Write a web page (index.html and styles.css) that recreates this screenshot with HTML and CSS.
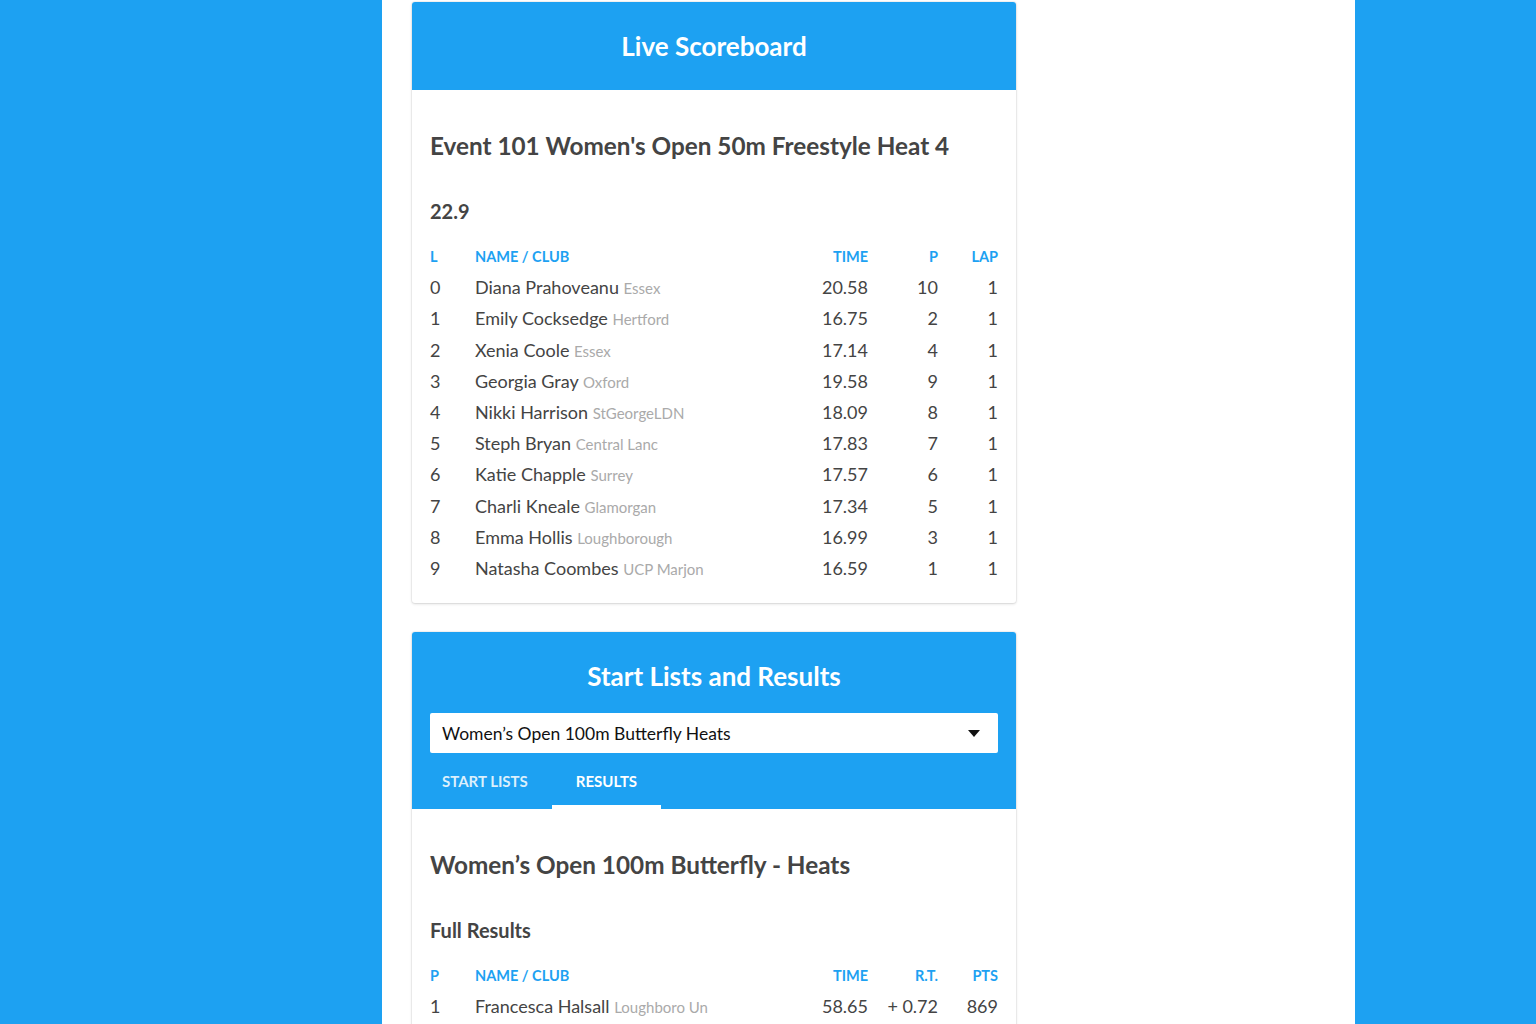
FILE: index.html
```html
<!DOCTYPE html>
<html lang="en">
<head>
<meta charset="utf-8">
<title>Live Scoreboard</title>
<link rel="stylesheet" href="styles.css">
</head>
<body>
<main class="page">
  <section class="card">
    <header class="card-head">
      <h1 class="card-title">Live Scoreboard</h1>
    </header>
    <div class="card-body">
      <h2 class="section-title">Event 101 Women's Open 50m Freestyle Heat 4</h2>
      <div class="sub-title">22.9</div>
      <div class="table">
        <div class="row head"><span>L</span><span>NAME / CLUB</span><span class="num">TIME</span><span class="num">P</span><span class="num">LAP</span></div>
        <div class="row"><span>0</span><span>Diana Prahoveanu <small>Essex</small></span><span class="num">20.58</span><span class="num">10</span><span class="num">1</span></div>
        <div class="row"><span>1</span><span>Emily Cocksedge <small>Hertford</small></span><span class="num">16.75</span><span class="num">2</span><span class="num">1</span></div>
        <div class="row"><span>2</span><span>Xenia Coole <small>Essex</small></span><span class="num">17.14</span><span class="num">4</span><span class="num">1</span></div>
        <div class="row"><span>3</span><span>Georgia Gray <small>Oxford</small></span><span class="num">19.58</span><span class="num">9</span><span class="num">1</span></div>
        <div class="row"><span>4</span><span>Nikki Harrison <small>StGeorgeLDN</small></span><span class="num">18.09</span><span class="num">8</span><span class="num">1</span></div>
        <div class="row"><span>5</span><span>Steph Bryan <small>Central Lanc</small></span><span class="num">17.83</span><span class="num">7</span><span class="num">1</span></div>
        <div class="row"><span>6</span><span>Katie Chapple <small>Surrey</small></span><span class="num">17.57</span><span class="num">6</span><span class="num">1</span></div>
        <div class="row"><span>7</span><span>Charli Kneale <small>Glamorgan</small></span><span class="num">17.34</span><span class="num">5</span><span class="num">1</span></div>
        <div class="row"><span>8</span><span>Emma Hollis <small>Loughborough</small></span><span class="num">16.99</span><span class="num">3</span><span class="num">1</span></div>
        <div class="row"><span>9</span><span>Natasha Coombes <small>UCP Marjon</small></span><span class="num">16.59</span><span class="num">1</span><span class="num">1</span></div>
      </div>
    </div>
  </section>

  <section class="card">
    <header class="card-head tall">
      <h1 class="card-title">Start Lists and Results</h1>
      <div class="select">
        <span>Women’s Open 100m Butterfly Heats</span>
        <svg class="caret" width="12" height="7" viewBox="0 0 12 7"><path d="M0 0h12L6 7z" fill="#111"/></svg>
      </div>
      <nav class="tabs">
        <span class="tab">START LISTS</span>
        <span class="tab active">RESULTS</span>
      </nav>
    </header>
    <div class="card-body">
      <h2 class="section-title">Women’s Open 100m Butterfly - Heats</h2>
      <div class="sub-title">Full Results</div>
      <div class="table">
        <div class="row head"><span>P</span><span>NAME / CLUB</span><span class="num">TIME</span><span class="num">R.T.</span><span class="num">PTS</span></div>
        <div class="row"><span>1</span><span>Francesca Halsall <small>Loughboro Un</small></span><span class="num">58.65</span><span class="num">+ 0.72</span><span class="num">869</span></div>
      </div>
    </div>
  </section>
</main>
</body>
</html>
```

FILE: styles.css
```css
* { box-sizing: border-box; }

html, body {
  margin: 0;
  padding: 0;
}

body {
  background: #1da1f2;
  font-family: Lato, "Noto Sans", sans-serif;
  color: #444;
  height: 1024px;
  overflow: hidden;
}

.page {
  width: 973px;
  margin-left: 382px;
  min-height: 1024px;
  background: #fff;
  padding: 2px 339px 0 30px;
  display: flex;
  flex-direction: column;
  gap: 29px;
}

.card {
  background: #fff;
  border-radius: 3px;
  box-shadow: 0 1px 3px rgba(0, 0, 0, 0.14), 0 0 0 1px rgba(0, 0, 0, 0.04);
  overflow: hidden;
}

.card-head {
  background: #1da1f2;
  height: 88px;
  display: flex;
  flex-direction: column;
  align-items: center;
  justify-content: center;
  padding: 0 18px;
}

.card-head.tall {
  height: auto;
  justify-content: flex-start;
  align-items: stretch;
  padding-top: 28px;
}

.card-title {
  margin: 0;
  color: #fff;
  font-size: 26px;
  font-weight: 700;
  line-height: 32px;
  text-align: center;
}

.select {
  margin-top: 21px;
  height: 40px;
  background: #fff;
  border-radius: 2px;
  display: flex;
  align-items: center;
  justify-content: space-between;
  padding: 0 18px 0 12px;
  font-size: 17.5px;
  color: #111;
}

.caret { display: block; }

.tabs {
  display: flex;
  margin-left: -12px;
  height: 56px;
}

.tab {
  display: flex;
  align-items: center;
  justify-content: center;
  padding: 4px 24px 0;
  font-size: 15px;
  font-weight: 700;
  color: rgba(255, 255, 255, 0.85);
  border-bottom: 4px solid transparent;
}

.tab.active {
  color: #fff;
  border-bottom-color: #fff;
}

.card-body {
  padding: 40px 18px 19px;
}

.section-title {
  margin: 0 0 37px;
  font-size: 24.3px;
  font-weight: 700;
  line-height: 32px;
  color: #444;
}

.sub-title {
  margin: 0 0 18px;
  font-size: 20px;
  font-weight: 700;
  line-height: 24px;
  color: #444;
}

.row {
  display: grid;
  grid-template-columns: 45px 1fr 80px 70px 60px;
  height: 31.2px;
  align-items: center;
  font-size: 18px;
  color: #444;
  padding-bottom: 1px;
}

.row.head {
  font-size: 14.5px;
  font-weight: 700;
  color: #1da1f2;
}

.num { text-align: right; }

.row small {
  font-size: 15px;
  color: #aaa;
}
```
